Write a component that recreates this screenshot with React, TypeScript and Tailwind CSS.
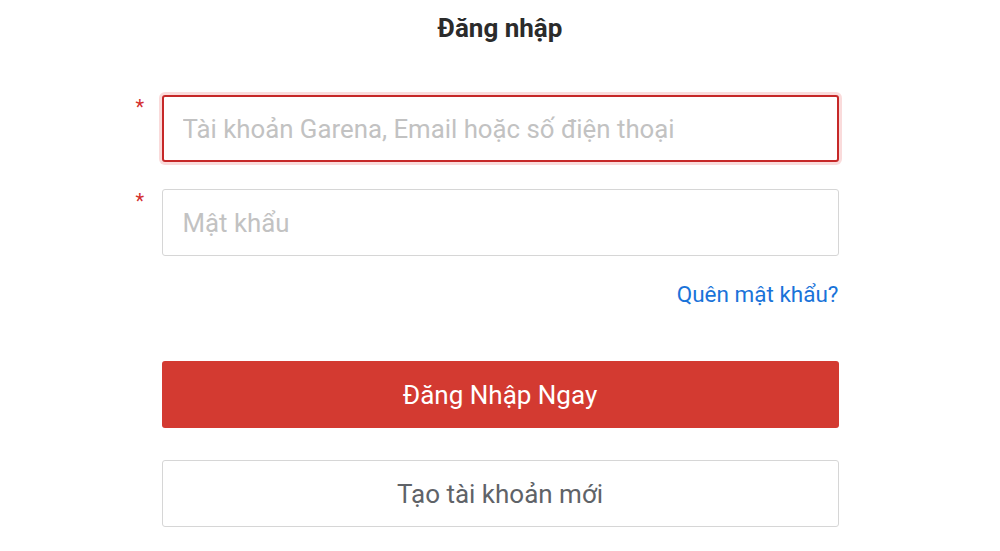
export default function App() {
  return (
    <div
      className="min-h-[551px] bg-white"
      style={{ fontFamily: "Roboto, 'Noto Sans', sans-serif" }}
    >
      <h1 className="pt-[13px] text-center text-[26px] font-bold leading-[30px] text-[#2b2b2b]">
        Đăng nhập
      </h1>

      <form className="mx-auto mt-[52px] w-[677px]">
        <div className="relative">
          <span className="absolute left-[-26px] top-[2px] text-[20px] leading-none text-[#d32f2f]">
            *
          </span>
          <input
            type="text"
            placeholder="Tài khoản Garena, Email hoặc số điện thoại"
            className="h-[67px] w-full rounded-[3px] border-2 border-[#c62828] px-[19px] text-[25.8px] text-[#333] shadow-[0_0_0_3px_rgba(229,57,53,0.18)] outline-none placeholder:text-[#c2c2c2]"
          />
        </div>

        <div className="relative mt-[27px]">
          <span className="absolute left-[-26px] top-[2px] text-[20px] leading-none text-[#d32f2f]">
            *
          </span>
          <input
            type="password"
            placeholder="Mật khẩu"
            className="h-[67px] w-full rounded-[3px] border border-[#d6d6d6] px-[20px] text-[25.8px] text-[#333] outline-none placeholder:text-[#c2c2c2]"
          />
        </div>

        <div className="mt-[24px] flex justify-end">
          <a href="#" className="text-[22.5px] leading-[28px] text-[#1a73d9]">
            Quên mật khẩu?
          </a>
        </div>

        <button
          type="button"
          className="mt-[53px] h-[67px] w-full rounded-[3px] bg-[#d33a31] pt-[2px] text-[26px] text-white"
        >
          Đăng Nhập Ngay
        </button>

        <button
          type="button"
          className="mt-[32px] h-[67px] w-full rounded-[3px] border border-[#d6d6d6] bg-white pt-[2px] text-[26px] text-[#5f6368]"
        >
          Tạo tài khoản mới
        </button>
      </form>
    </div>
  );
}
